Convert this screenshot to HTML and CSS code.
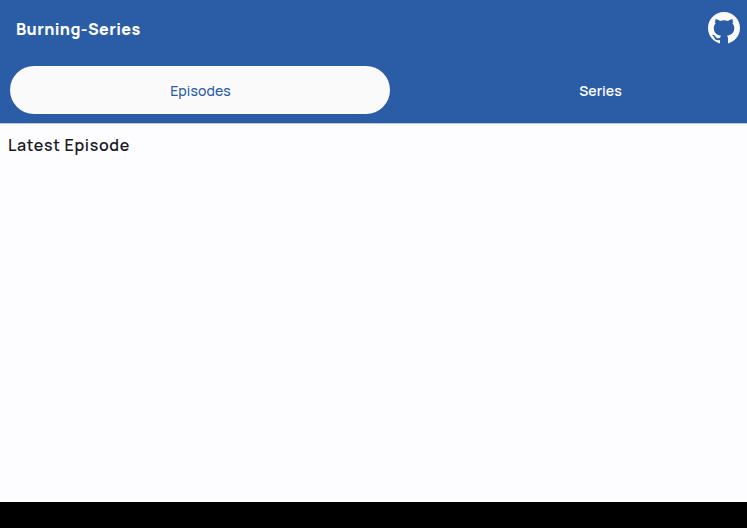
FILE: index.html
```html
<!DOCTYPE html>
<html lang="en">
<head>
<meta charset="utf-8">
<title>Burning-Series</title>
<link rel="stylesheet" href="styles.css">
</head>
<body>
<header class="header">
  <div class="appbar">
    <h1 class="title">Burning-Series</h1>
    <a class="github" href="#" aria-label="GitHub">
      <svg viewBox="0 0 16 16" width="32" height="32" fill="currentColor"><path d="M8 0C3.58 0 0 3.58 0 8c0 3.7 2.55 6.85 6 7.74v-1.71c-2.01.37-2.53-.49-2.69-.94-.09-.23-.48-.94-.82-1.13-.28-.15-.68-.52-.01-.53.63-.01 1.08.58 1.23.82.72 1.21 1.87.87 2.33.66.07-.52.28-.87.51-1.07-1.78-.2-3.64-.89-3.64-3.95 0-.87.31-1.59.82-2.15-.08-.2-.36-1.02.08-2.12 0 0 .67-.21 2.2.82.64-.18 1.32-.27 2-.27s1.36.09 2 .27c1.53-1.04 2.2-.82 2.2-.82.44 1.1.16 1.92.08 2.12.51.56.82 1.27.82 2.15 0 3.07-1.87 3.75-3.65 3.95.29.25.54.73.54 1.48v2.42C13.45 14.85 16 11.7 16 8c0-4.42-3.58-8-8-8z"/></svg>
    </a>
  </div>
  <nav class="tabs">
    <a class="tab active" href="#">Episodes</a>
    <a class="tab series" href="#">Series</a>
  </nav>
</header>
<main class="content"><h2 class="heading">Latest Episode</h2></main>
<footer class="footer"></footer>
</body>
</html>
```
FILE: styles.css
```css
* { box-sizing: border-box; }
body { margin: 0; height: 528px; display: flex; flex-direction: column; overflow: hidden; background: #fdfdff; font-family: Manrope, Inter, "Liberation Sans", sans-serif; }
.header { height: 124px; background: #2b5da7; color: #fdfdff; border-bottom: 1px solid #b9c3d9; }
.appbar { height: 56px; display: flex; align-items: center; justify-content: space-between; padding: 0 7px 0 16px; }
.title { margin: 2px 0 0; font-size: 16px; line-height: 24px; font-weight: 800; letter-spacing: .4px; }
.github { display: flex; color: #fafafa; }
.tabs { display: flex; justify-content: space-between; padding: 10px 0 0 10px; }
.tab { width: 380px; height: 48px; border-radius: 24px; display: flex; align-items: center; justify-content: center; font-size: 14px; line-height: 20px; font-weight: 600; text-decoration: none; color: #fdfdff; padding: 2px 0 0 1px; }
.active { background: #fafafa; color: #2b5da7; font-weight: 500; letter-spacing: .1px; }
.series { width: 294px; }
.content { flex: 1; padding: 9px 8px; }
.heading { margin: 0; color: #1b1b1f; font-size: 16px; line-height: 24px; font-weight: 600; letter-spacing: .65px; }
.footer { height: 26px; background: #000; }
```
